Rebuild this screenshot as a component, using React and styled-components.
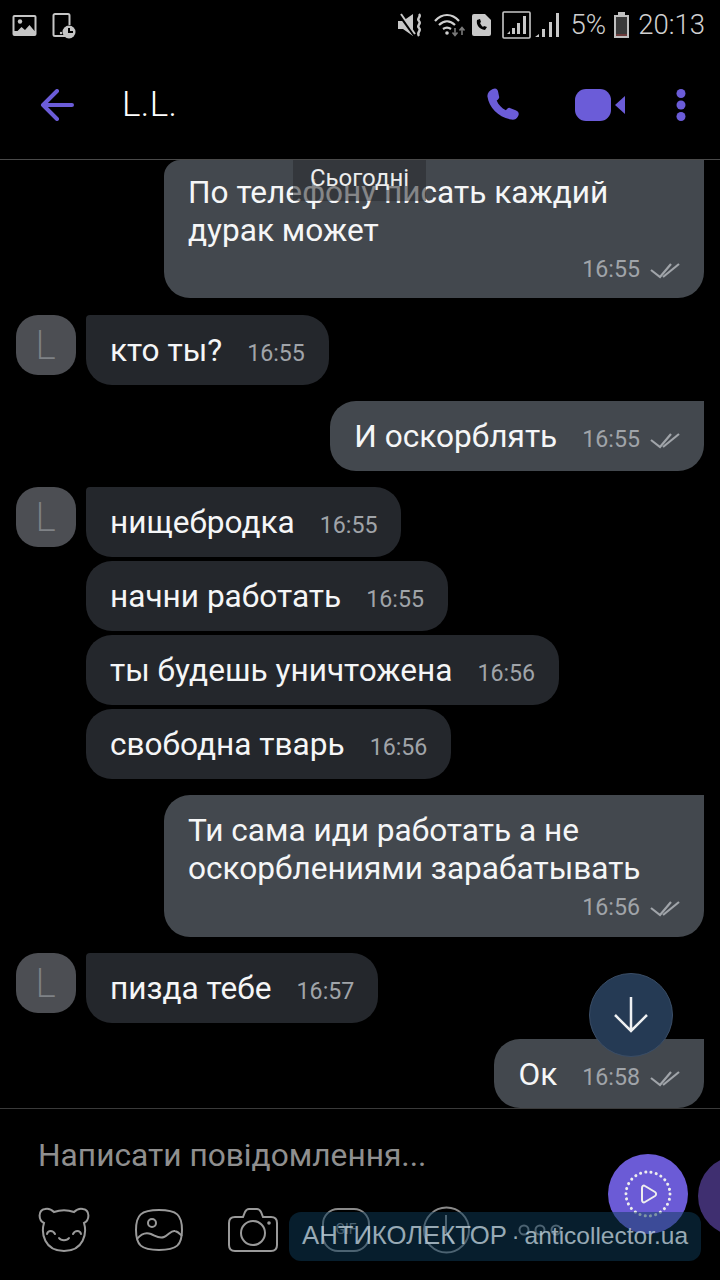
import React from "react";
import styled, { createGlobalStyle } from "styled-components";

const Global = createGlobalStyle`
  html, body { margin: 0; padding: 0; background: #000; }
  * { box-sizing: border-box; }
`;

const Page = styled.div`
  position: relative;
  width: 720px;
  height: 1280px;
  overflow: hidden;
  background: #000;
  font-family: Roboto, "Noto Sans", sans-serif;
  color: #f4f5f6;
  display: flex;
  flex-direction: column;
`;

const StatusBar = styled.div`
  height: 52px;
  padding: 11px 15px 0 12px;
  display: flex;
  align-items: flex-start;
  justify-content: space-between;
  color: #c4c4c4;
`;
const StatusGroup = styled.div`
  display: flex;
  align-items: center;
  gap: ${(p) => p.$gap || 0}px;
  height: 28px;
`;
const StatusText = styled.span`
  font-size: 27.5px;
  line-height: 28px;
  font-weight: 300;
  color: #d0d0d0;
  margin-left: ${(p) => p.$ml || 0}px;
`;

const Header = styled.header`
  height: 108px;
  border-bottom: 1px solid #4a4a4a;
  display: flex;
  align-items: center;
  padding: 0 34px 2px 40px;
`;
const Title = styled.h1`
  margin: 0 0 0 48px;
  font-size: 35px;
  font-weight: 300;
  color: #fff;
  flex: 1;
  letter-spacing: 0.4px;
`;
const HeaderIcons = styled.div`
  display: flex;
  align-items: center;
`;

const Messages = styled.main`
  height: 948px;
  overflow: hidden;
  display: flex;
  flex-direction: column;
  padding: 0 16px;
`;
const OwnRow = styled.div`
  display: flex;
  flex-shrink: 0;
  justify-content: flex-end;
  margin-bottom: ${(p) => p.$mb ?? 16}px;
`;
const PeerRow = styled.div`
  display: flex;
  flex-shrink: 0;
  align-items: flex-start;
  margin-bottom: ${(p) => p.$mb ?? 4}px;
  padding-left: ${(p) => (p.$indent ? 70 : 0)}px;
`;
const Avatar = styled.div`
  width: 60px;
  height: 60px;
  border-radius: 22px;
  background: #4c4e53;
  color: #7f8286;
  margin-right: 10px;
  display: flex;
  align-items: center;
  justify-content: center;
  font-family: Inter, Roboto, sans-serif;
  font-size: 39px;
  font-weight: 200;
  line-height: 60px;
`;
const Bubble = styled.div`
  background: ${(p) => (p.$own ? "#43484e" : "#24272c")};
  border-radius: ${(p) =>
    p.$own ? "26px 0 26px 26px" : p.$first ? "4px 26px 26px 26px" : "26px"};
  padding: 17px 24px 0;
  height: ${(p) => p.$h || 70}px;
  display: flex;
  align-items: ${(p) => (p.$wide ? "stretch" : "flex-start")};
  flex-direction: ${(p) => (p.$wide ? "column" : "row")};
  width: ${(p) => (p.$w ? p.$w + "px" : "auto")};
`;
const Text = styled.span`
  font-size: 31.6px;
  line-height: 38px;
  color: #f5f6f7;
  white-space: pre-line;
`;
const Meta = styled.span`
  display: flex;
  align-items: center;
  margin-left: ${(p) => (p.$wide ? "auto" : "25px")};
  margin-top: ${(p) => (p.$wide ? "3px" : "5px")};
  align-self: ${(p) => (p.$wide ? "flex-end" : "auto")};
  height: 32px;
`;
const Time = styled.span`
  font-size: 23.2px;
  line-height: 32px;
  color: #a0a4a9;
`;
const Ticks = styled.svg`
  margin-left: 10px;
  margin-top: 2px;
`;

const DayPill = styled.div`
  position: absolute;
  left: 293px;
  top: 160px;
  width: 133px;
  height: 41px;
  background: rgba(40, 42, 46, 0.55);
  color: #eceded;
  font-size: 24px;
  text-align: center;
  line-height: 36px;
`;
const ScrollButton = styled.div`
  position: absolute;
  left: 589px;
  top: 973px;
  width: 84px;
  height: 84px;
  border-radius: 50%;
  background: #253a54;
  border: 1px solid #3a4d66;
  display: flex;
  align-items: center;
  justify-content: center;
`;

const Composer = styled.footer`
  flex: 1;
  border-top: 1px solid #3a3a3a;
  padding: 27px 0 0 38px;
  display: flex;
  flex-direction: column;
`;
const Placeholder = styled.div`
  font-size: 31.7px;
  line-height: 40px;
  color: #8f8f8f;
`;
const Tools = styled.div`
  display: flex;
  align-items: center;
  gap: 42px;
  margin-top: 30px;
`;
const SendButton = styled.div`
  position: absolute;
  left: 608px;
  top: 1154px;
  width: 80px;
  height: 80px;
  border-radius: 50%;
  background: #6b5bd6;
  display: flex;
  align-items: center;
  justify-content: center;
`;
const SecondButton = styled.div`
  position: absolute;
  left: 698px;
  top: 1156px;
  width: 80px;
  height: 80px;
  border-radius: 50%;
  background: #3f2f70;
`;
const Watermark = styled.div`
  position: absolute;
  left: 289px;
  top: 1212px;
  width: 412px;
  height: 49px;
  border-radius: 12px;
  background: rgba(14, 60, 90, 0.5);
  color: rgba(210, 225, 235, 0.72);
  font-family: "Liberation Sans", Arial, sans-serif;
  font-size: 24.5px;
  line-height: 47px;
  padding-left: 13px;
  white-space: nowrap;
  word-spacing: -2px;
`;
const WatermarkBrand = styled.span`
  font-size: 25.7px;
`;

const TicksIcon = () => (
  <Ticks width="30" height="18" viewBox="0 0 30 18" fill="none" stroke="#a0a4a9" strokeWidth="2.2">
    <path d="M1 9l9 7L21 3" />
    <path d="M13 16L29 3" />
  </Ticks>
);

const Own = ({ children, time, wide, h, w, mb }) => (
  <OwnRow $mb={mb}>
    <Bubble $own $wide={wide} $h={h} $w={w}>
      <Text>{children}</Text>
      <Meta $wide={wide}>
        <Time>{time}</Time>
        <TicksIcon />
      </Meta>
    </Bubble>
  </OwnRow>
);

const Peer = ({ children, time, avatar, mb }) => (
  <PeerRow $indent={!avatar} $mb={mb}>
    {avatar && <Avatar>L</Avatar>}
    <Bubble $first={avatar}>
      <Text>{children}</Text>
      <Meta>
        <Time>{time}</Time>
      </Meta>
    </Bubble>
  </PeerRow>
);

const TopBubbleRow = styled(OwnRow)`
  margin-bottom: 17px;
`;
const TopBubble = styled(Bubble)`
  padding-top: 14px;
  border-radius: 16px 0 26px 26px;
`;

export default function App() {
  return (
    <Page>
      <Global />
      <StatusBar>
        <StatusGroup $gap={15}>
          <svg width="25" height="24" viewBox="0 0 25 24">
            <rect x="0.5" y="2" width="24" height="21" rx="2" fill="#c6c6c6" />
            <rect x="2.5" y="4" width="20" height="14" fill="#000" />
            <circle cx="8" cy="8.5" r="2.2" fill="#c6c6c6" />
            <path d="M2.5 21l7-7 3.5 3 4.5-5 5 6v3z" fill="#c6c6c6" />
          </svg>
          <svg width="24" height="26" viewBox="0 0 24 26" style={{ marginTop: 2 }}>
            <path d="M13 23H3a1.5 1.5 0 0 1-1.5-1.5V2.5A1.5 1.5 0 0 1 3 1h13a1.5 1.5 0 0 1 1.5 1.5V12" fill="none" stroke="#c6c6c6" strokeWidth="2" />
            <circle cx="9" cy="20" r="1.2" fill="#c6c6c6" />
            <circle cx="17" cy="19" r="6.5" fill="#c6c6c6" />
            <path d="M17 15v4h4" fill="none" stroke="#000" strokeWidth="2" />
          </svg>
        </StatusGroup>
        <StatusGroup>
          <svg width="25" height="24" viewBox="0 0 25 24">
            <path d="M0 8h5l10-7v22L5 16H0z" fill="#c8c8c8" />
            <path d="M1 1l15 21" stroke="#000" strokeWidth="3" />
            <path d="M3 1l14 20" stroke="#c8c8c8" strokeWidth="2" />
            <path d="M21 1c3 3-3 4 0 7s-3 4 0 7-3 4 0 8" fill="none" stroke="#c8c8c8" strokeWidth="2.4" />
          </svg>
          <svg width="32" height="24" viewBox="0 0 32 24" style={{ marginLeft: 11 }} fill="none" stroke="#d0d0d0" strokeWidth="2.2">
            <path d="M1 8c7-8 17-8 24 0" />
            <path d="M5 12c5-5 11-5 16 0" />
            <path d="M9 16c3-2 5-2 8 0" />
            <circle cx="13" cy="20" r="1.8" fill="#d0d0d0" stroke="none" />
            <path d="M21 15v7M18.500 19.500l2.500 3 2.500-3" stroke="#7a7a7a" strokeWidth="1.6" />
            <path d="M28 22v-7M25.500 17.500l2.500-3 2.500 3" stroke="#7a7a7a" strokeWidth="1.6" />
          </svg>
          <svg width="21" height="24" viewBox="0 0 21 24" style={{ marginLeft: 5 }}>
            <path d="M1 3a2 2 0 0 1 2-2h11l6 6v14a2 2 0 0 1-2 2H3a2 2 0 0 1-2-2z" fill="#c8c8c8" />
            <path d="M6 7c-1 5 2 9 8 10l2-3-3-1-1 1c-1-1-2-2-3-4l1-1-1-3z" fill="#000" />
          </svg>
          <svg width="29" height="28" viewBox="0 0 29 28" style={{ marginLeft: 10 }}>
            <rect x="1" y="1" width="27" height="26" rx="1" fill="none" stroke="#c8c8c8" strokeWidth="1.6" />
            <path d="M5 23l3-3v3zM10 23v-6h3v6zM15 23V12h3v11zM21 23V5h3v18z" fill="#c8c8c8" />
          </svg>
          <svg width="25" height="26" viewBox="0 0 25 26" style={{ marginLeft: 4 }}>
            <path d="M0 25l4-3v3zM7 25v-8h3v8zM14 25V10h3v15zM21 25V1h3v24z" fill="#c8c8c8" />
          </svg>
          <StatusText $ml={11}>5%</StatusText>
          <svg width="17" height="26" viewBox="0 0 17 26" style={{ marginLeft: 7 }}>
            <path d="M5 0h7v3h4v23H1V3h4z" fill="#c0c0c0" />
            <rect x="3" y="5" width="11" height="19" fill="#3a3a3a" />
            <rect x="3" y="22" width="11" height="2" fill="#6b3b3b" />
          </svg>
          <StatusText $ml={8}>20:13</StatusText>
        </StatusGroup>
      </StatusBar>

      <Header>
        <svg width="34" height="32" viewBox="0 0 34 32" fill="none" stroke="#6b5cd8" strokeWidth="4" strokeLinecap="round" strokeLinejoin="round">
          <path d="M32 16H3M17 2L3 16l14 14" />
        </svg>
        <Title>L.L.</Title>
        <HeaderIcons>
          <svg width="33" height="33" viewBox="0 0 34 34" fill="#6b5cd8" style={{ marginRight: 55 }}>
            <path d="M6 1c3-1.500 5 0 5.500 3l1 5c.3 1.500-.5 2.500-2.500 4 1.500 4 5 8 9.500 10 1.500-2 2.500-3 4-2.500l6 2.500c3 1.200 4 3.500 2.500 6-1.500 3-4 4-7 3.500C12 30.500 2 20 .5 9 0 5.500 2.500 2.500 6 1z" />
          </svg>
          <svg width="50" height="32" viewBox="0 0 50 32" fill="#6b5cd8">
            <rect x="0" y="0" width="36" height="32" rx="11" />
            <path d="M40 16l10-9v18z" />
          </svg>
          <svg width="10" height="32" viewBox="0 0 10 32" fill="#6b5cd8" style={{ marginLeft: 51 }}>
            <circle cx="5" cy="4.500" r="4.500" />
            <circle cx="5" cy="16" r="4.500" />
            <circle cx="5" cy="27.500" r="4.500" />
          </svg>
        </HeaderIcons>
      </Header>

      <Messages>
        <TopBubbleRow>
          <TopBubble $own $wide $h={138} $w={540}>
            <Text>{"По телефону писать каждий\nдурак может"}</Text>
            <Meta $wide>
              <Time>16:55</Time>
              <TicksIcon />
            </Meta>
          </TopBubble>
        </TopBubbleRow>
        <Peer avatar time="16:55" mb={16}>кто ты?</Peer>
        <Own time="16:55">И оскорблять</Own>
        <Peer avatar time="16:55">нищебродка</Peer>
        <Peer time="16:55">начни работать</Peer>
        <Peer time="16:56">ты будешь уничтожена</Peer>
        <Peer time="16:56" mb={16}>свободна тварь</Peer>
        <Own time="16:56" wide h={142} w={540}>
          {"Ти сама иди работать а не\nоскорблениями зарабатывать"}
        </Own>
        <Peer avatar time="16:57" mb={16}>пизда тебе</Peer>
        <Own time="16:58" mb={0} h={69}>Ок</Own>
      </Messages>

      <Composer>
        <Placeholder>Написати повідомлення...</Placeholder>
        <Tools>
          <svg width="52" height="46" viewBox="0 0 52 46" fill="none" stroke="#9a9a9a" strokeWidth="2" strokeLinecap="round">
            <path d="M6 16C0 13 0 3 7 2c4-1 7 1 9 3 6-2 14-2 20 0 2-2 5-4 9-3 7 1 7 11 1 14 3 10 0 28-20 28S3 26 6 16z" />
            <path d="M9 27c1-4 6-4 8 0M35 27c2-4 7-4 8 0M21 31c2 3 8 3 10 0" />
          </svg>
          <svg width="48" height="42" viewBox="0 0 48 42" fill="none" stroke="#9a9a9a" strokeWidth="2" style={{ marginLeft: 3 }}>
            <path d="M1 21C1 6 6 1 24 1s23 5 23 20-5 20-23 20S1 36 1 21z" />
            <circle cx="17" cy="14" r="4" />
            <path d="M2 30c4-5 9-7 14-5s8 5 13 3 7-7 11-6c3 .500 5 3 7 5" />
          </svg>
          <svg width="50" height="44" viewBox="0 0 50 44" fill="none" stroke="#9a9a9a" strokeWidth="2" style={{ marginLeft: 3 }}>
            <path d="M7 9h8l2-5c1-2 3-3 4-3h8c2 0 3 1 4 3l2 5h8c4 0 6 2 6 6v22c0 4-2 6-6 6H7c-4 0-6-2-6-6V15c0-4 2-6 6-6z" />
            <circle cx="25" cy="25" r="12" />
            <circle cx="41" cy="15" r="1.800" fill="#9a9a9a" stroke="none" />
          </svg>
          <svg width="48" height="44" viewBox="0 0 48 44" fill="none" stroke="#8a8a8a" strokeWidth="2" style={{ marginLeft: 2 }}>
            <rect x="1" y="1" width="46" height="42" rx="15" />
            <text x="24" y="26" fontSize="14" fontFamily="Roboto, sans-serif" textAnchor="middle" fill="#8a8a8a" stroke="none">GIF</text>
          </svg>
          <svg width="47" height="48" viewBox="0 0 47 48" fill="none" stroke="#8a8a8a" strokeWidth="2" style={{ marginLeft: 11 }}>
            <circle cx="23.500" cy="24" r="22.500" />
            <path d="M23 9v17l8 11" />
          </svg>
          <svg width="44" height="12" viewBox="0 0 44 12" fill="none" stroke="#8a8a8a" strokeWidth="2" style={{ marginLeft: 6 }}>
            <circle cx="6" cy="6" r="4.500" />
            <circle cx="22" cy="6" r="4.500" />
            <circle cx="38" cy="6" r="4.500" />
          </svg>
        </Tools>
      </Composer>

      <DayPill>Сьогодні</DayPill>
      <ScrollButton>
        <svg width="36" height="38" viewBox="0 0 36 38" fill="none" stroke="#eef0f2" strokeWidth="2.500">
          <path d="M18 1v34M2 19l16 16 16-16" />
        </svg>
      </ScrollButton>
      <SecondButton />
      <SendButton>
        <svg width="48" height="48" viewBox="0 0 48 48" fill="none" stroke="#eee" strokeWidth="2.500">
          <circle cx="24" cy="24" r="22" strokeDasharray="0.100 5.200" strokeLinecap="round" strokeWidth="3" />
          <path d="M18 18c0-2 1.500-3 3-2l10 6c1.500 1 1.500 3 0 4l-10 6c-1.500 1-3 0-3-2z" strokeWidth="2" />
        </svg>
      </SendButton>
      <Watermark><WatermarkBrand>АНТИКОЛЕКТОР</WatermarkBrand> · anticollector.ua</Watermark>
    </Page>
  );
}
